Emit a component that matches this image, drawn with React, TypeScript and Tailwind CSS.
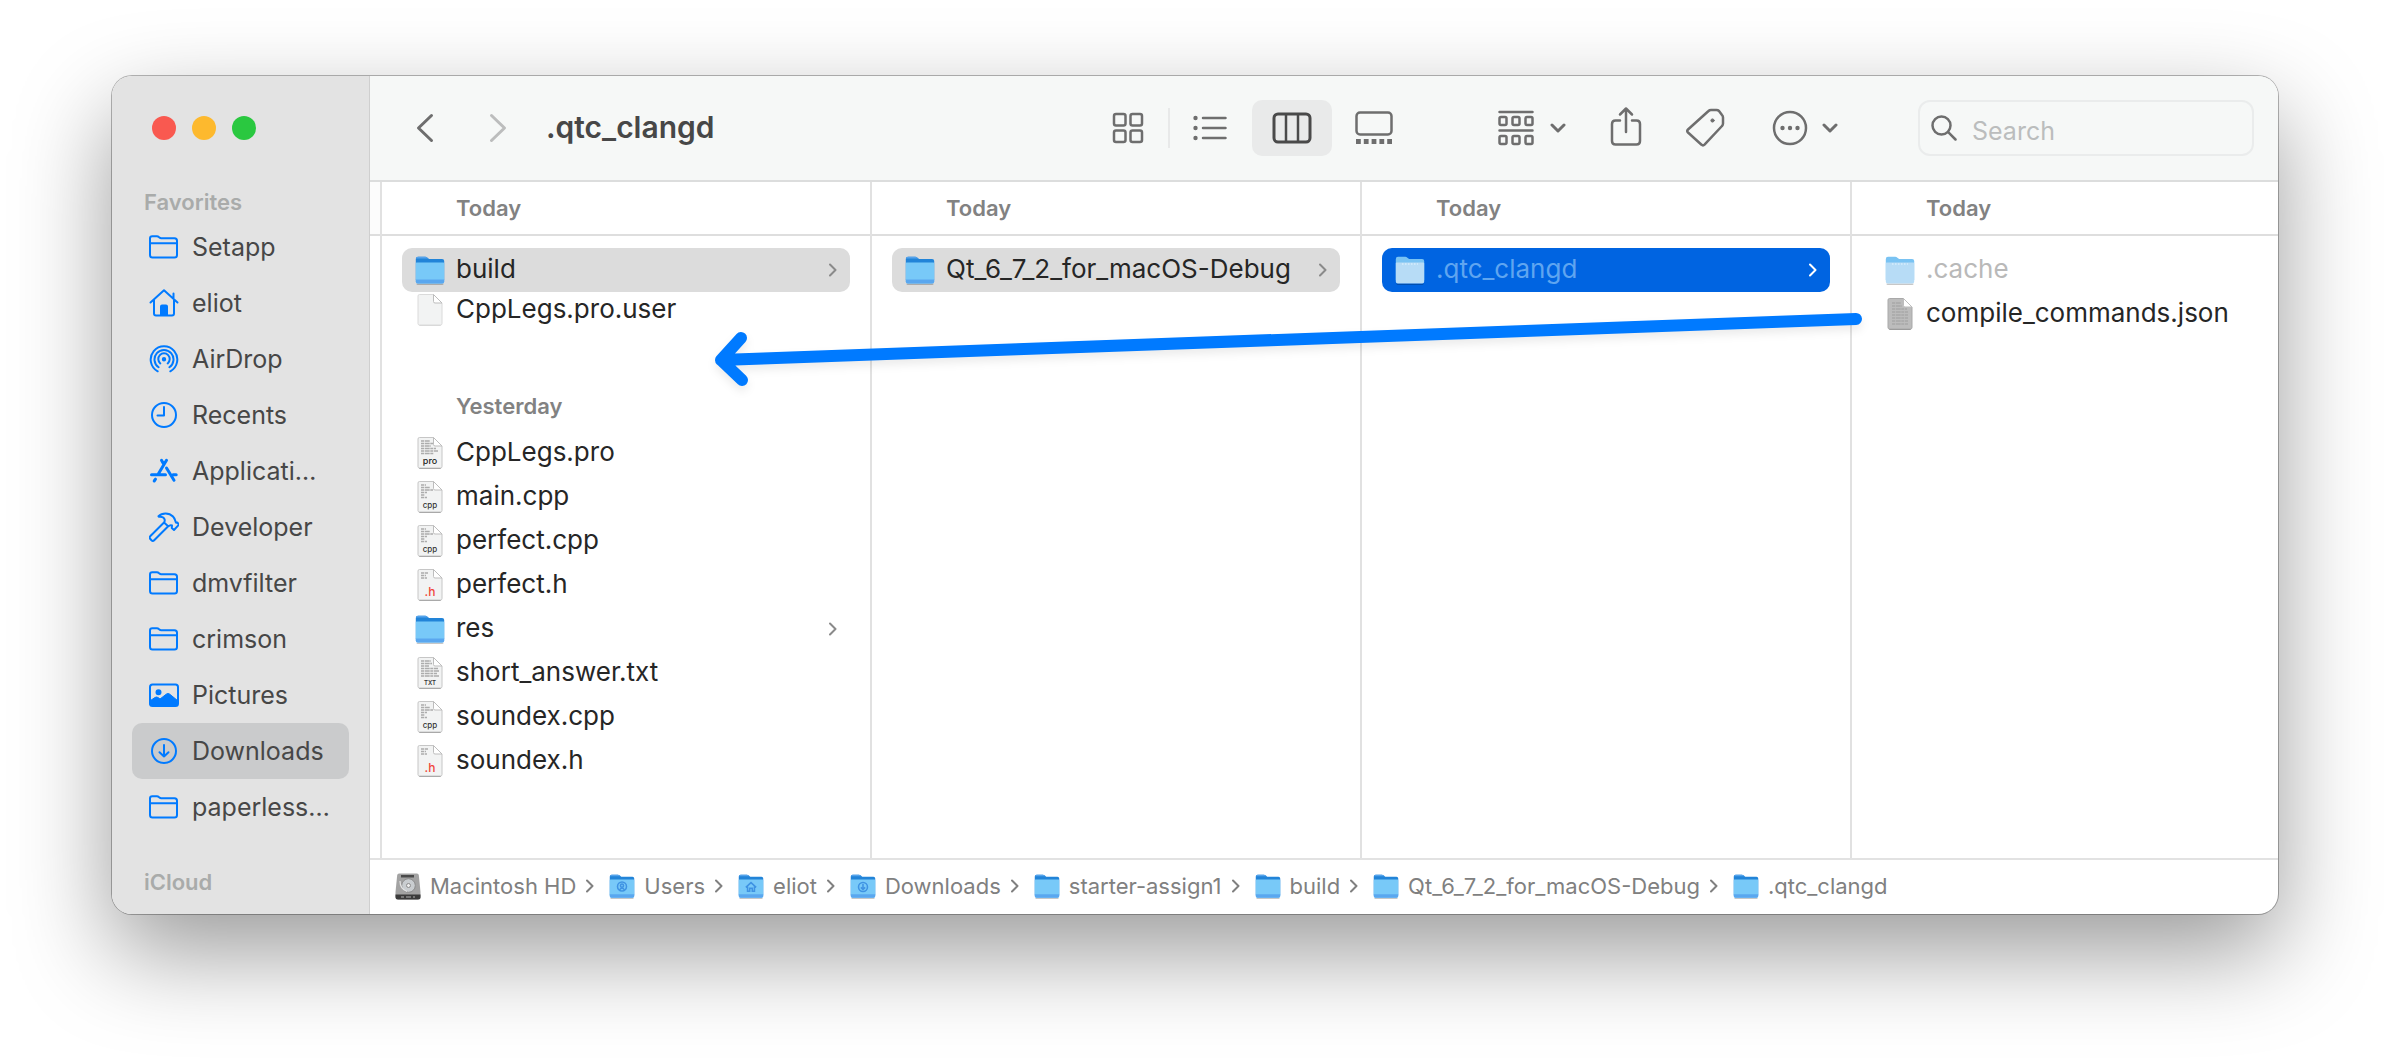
import type { ReactNode } from "react";

type Kind = "folder" | "dim" | "selected" | "blank" | "pro" | "cpp" | "h" | "txt" | "json";

function FolderIcon({ pale = false, glyph, small = false }: { pale?: boolean; glyph?: "users" | "home" | "down"; small?: boolean }) {
  const back = pale ? "#79c3f3" : "#2284d8";
  const front = pale ? "#b7dcf6" : "#78c9f8";
  return (
    <svg viewBox="0 0 30 29" className={small ? "h-[25px] w-[26px] shrink-0" : "h-[29px] w-[30px] shrink-0"} aria-hidden="true">
      <path d="M1.5 27.5h27v.6q0 .9-1 .9h-25q-1 0-1-.9z" fill="#000" opacity=".22" />
      <path d="M.8 3.2Q.8.8 3 .8h7.2q1.3 0 2.2.9l1 .8q.7.6 1.7.6h12q2.1 0 2.1 2V24H.8z" fill={back} />
      {!pale && <path d="M.8 3.2Q.8.8 3 .8h7.2q1.3 0 2.2.9l1 .8H.8z" fill="#55a3ec" />}
      <path d="M.8 7.2q0-.8.8-.8h26.8q.8 0 .8.8V25.6q0 2-2 2H2.8q-2 0-2-2z" fill={front} />
      {!pale && <path d="M.8 23.4h28.4v2.2q0 2-2 2H2.8q-2 0-2-2z" fill="#5aa7ef" />}
      {pale && <path d="M7 8h16" stroke="#e6f5ff" strokeDasharray="1.5 1.5" />}
      {glyph === "users" && (
        <g fill="none" stroke="#3f93e3" strokeWidth="1.8">
          <circle cx="15" cy="14.5" r="5.2" />
          <circle cx="15" cy="13.5" r="1.8" />
          <path d="M12 18.5q3-4 6 0" />
        </g>
      )}
      {glyph === "home" && <path d="M9 15.5l6-5.5 6 5.5M11 14.5V20h2.5v-3.5h3V20H19v-5.500" fill="none" stroke="#3f93e3" strokeWidth="1.8" />}
      {glyph === "down" && (
        <g fill="none" stroke="#3f93e3" strokeWidth="1.8">
          <circle cx="15" cy="15" r="5.2" />
          <path d="M15 11.5v6M12.5 15.5l2.5 2.5 2.5-2.5" />
        </g>
      )}
    </svg>
  );
}

function DocIcon({ kind }: { kind: Kind }) {
  const dark = kind === "json";
  const lines: Record<string, string> = {
    pro: "M4 4h9M4 6.5h12M4 9h10M4 11.5h15M4 14h17M4 16.5h13",
    cpp: "M4 4h5M4 6.5h9M4 9h12M4 11.5h6M4 14h4M4 16.5h6",
    h: "M4 4h7M4 6.5h5M4 9h6",
    txt: "M4 4h10M4 6.5h11M4 9h8M4 11.5h17M4 14h18M4 16.5h16M4 19h18",
    json: "M5 5h9M5 8h10M5 11h15M5 14h16M5 17h16M5 20h16M5 23h16M5 26h16",
  };
  const plain = kind === "blank";
  return (
    <svg viewBox="0 0 26 32" className="mx-[2px] h-8 w-[26px] shrink-0" aria-hidden="true">
      <path d="M2 30.500h22v.5q0 .8-1 .8H3q-1 0-1-.8z" fill="#000" opacity={plain ? ".2" : ".6"} />
      <path
        d="M1 2Q1 .5 2.5.5H16.5L25 9v20.5q0 1.5-1.5 1.5h-21Q1 31 1 29.5z"
        fill={dark ? "#bcbcbc" : "#f2f3f3"}
        stroke={dark ? "#a9a9a9" : plain ? "#dadada" : "#c6c6c6"}
        strokeWidth="1"
      />
      {lines[kind] && <path d={lines[kind]} stroke={dark ? "#a8a8a8" : "#acacac"} strokeWidth="1.3" strokeDasharray="3 .7 5 .6" />}
      <path d="M16.5.5V7.5Q16.5 9 18 9H25z" fill="#fff" stroke="#bdbdbd" strokeWidth="1" />
      {kind === "pro" && <text x="13" y="26.500" textAnchor="middle" fontSize="9" fontWeight="500" fill="#222">pro</text>}
      {kind === "cpp" && <text x="13" y="27" textAnchor="middle" fontSize="8" fontWeight="500" fill="#333">cpp</text>}
      {kind === "txt" && <text x="13" y="28" textAnchor="middle" fontSize="6" fontWeight="600" fill="#333">TXT</text>}
      {kind === "h" && <text x="13" y="26.500" textAnchor="middle" fontSize="12" fontWeight="500" fill="#f0473c">.h</text>}
    </svg>
  );
}

function Arrow({ className }: { className: string }) {
  return (
    <svg viewBox="0 0 8 14" className={className} fill="none" stroke="currentColor" strokeWidth="2" strokeLinecap="round" strokeLinejoin="round" aria-hidden="true">
      <path d="M1 1.5 6.5 7 1 12.5" />
    </svg>
  );
}

function SideIcon({ children }: { children: ReactNode }) {
  return (
    <svg viewBox="0 0 30 30" className="size-[30px] shrink-0 text-[#007aff]" fill="none" stroke="currentColor" strokeWidth="2" strokeLinecap="round" strokeLinejoin="round" aria-hidden="true">
      {children}
    </svg>
  );
}

const outlineFolder = (
  <SideIcon>
    <path d="M1 6.5Q1 4.2 3.3 4.2H8Q9 4.2 9.8 5l.6.5q.8.7 1.8.7H25.5Q28 6.2 28 8.7V23q0 2.5-2.5 2.5h-22Q1 25.5 1 23zM1 11.2h27" />
  </SideIcon>
);

const places: { name: string; icon: ReactNode; active?: boolean }[] = [
  { name: "Setapp", icon: outlineFolder },
  {
    name: "eliot",
    icon: (
      <SideIcon>
        <path d="M1.5 14.5 15 2.3 28.5 14.5M5 12v13.5q0 2 2 2H23q2 0 2-2V12M24.5 10V5.5" />
        <path d="M12 27v-8.5q0-1 1-1h4q1 0 1 1V27z" fill="currentColor" />
      </SideIcon>
    ),
  },
  {
    name: "AirDrop",
    icon: (
      <SideIcon>
        <path d="M8.7 27.3A13.3 13.3 0 1 1 21.3 27.3M9.6 23.2A9.5 9.5 0 1 1 20.4 23.2M11.3 19.4A5.7 5.7 0 1 1 18.7 19.4" />
        <circle cx="15" cy="15.2" r="1.2" fill="currentColor" />
      </SideIcon>
    ),
  },
  {
    name: "Recents",
    icon: (
      <SideIcon>
        <circle cx="15" cy="15" r="12" />
        <path d="M15 7v8.5H8.5" />
      </SideIcon>
    ),
  },
  {
    name: "Applicati…",
    icon: (
      <SideIcon>
        <path d="M2.5 18.7H16.5M24 18.7h3.2M17.5 4.3 9.3 18M12.5 4.3l2 3.5M17.5 12 25 24.3M6.5 23.2l-1.300 1.800" strokeWidth="3" />
      </SideIcon>
    ),
  },
  {
    name: "Developer",
    icon: (
      <SideIcon>
        <path d="M9.5 4.3C13 .5 20 .4 24 4.5 26.5 7 26 9.5 27 10.7L28.3 10.5 30 12.6 25 18 22.8 16 23 13.5C21 12.5 20.5 14 19.2 14.3L15 10.5C16.5 8.5 15.5 5.5 13 5 11.5 4.6 10 5 9.5 4.3ZM15 10.5 1.2 24.3Q0 25.7 1.3 27L2.5 28.3Q3.8 29.6 5.2 28.2L19.2 14.3" />
      </SideIcon>
    ),
  },
  { name: "dmvfilter", icon: outlineFolder },
  { name: "crimson", icon: outlineFolder },
  {
    name: "Pictures",
    icon: (
      <SideIcon>
        <rect x="1" y="4.5" width="28" height="21.5" rx="2.5" />
        <circle cx="9.5" cy="12.3" r="2" fill="currentColor" />
        <path d="M1.5 20.5 6 17.5q1.5-1 3 0L11 19l6.5-5q1.5-1 3 0L28.5 20.5V25H1.5z" fill="currentColor" strokeWidth="1" />
      </SideIcon>
    ),
  },
  {
    name: "Downloads",
    active: true,
    icon: (
      <SideIcon>
        <circle cx="15" cy="15" r="12" />
        <path d="M15 9v11.5M10.5 16.2l4.5 4.3 4.5-4.3" />
      </SideIcon>
    ),
  },
  { name: "paperless…", icon: outlineFolder },
];

function Row({ name, kind, open, short }: { name: string; kind: Kind; open?: boolean; short?: boolean }) {
  const isFolder = kind === "folder" || kind === "dim" || kind === "selected";
  const tone =
    kind === "selected" ? "bg-[#0064e1] text-[#5fa5f0]" : open ? "bg-[#dcdcdc] text-[#262626]" : kind === "dim" ? "text-[#b9b9b9]" : "text-[#262626]";
  return (
    <li>
      <button type="button" className={`flex w-full items-center rounded-[10px] px-[13px] text-left text-[26px] ${short ? "h-9" : "h-11"} ${tone}`}>
        {isFolder ? <FolderIcon pale={kind !== "folder"} /> : <DocIcon kind={kind} />}
        <span className="ml-[11px] min-w-0 flex-1 pb-[3px] whitespace-nowrap">{name}</span>
        {isFolder && kind !== "dim" && <Arrow className={`h-3.5 w-2 shrink-0 ${kind === "selected" ? "text-white" : "text-[#8a8a8a]"}`} />}
      </button>
    </li>
  );
}

function Column({ children }: { children: ReactNode }) {
  return (
    <section className="flex min-w-0 flex-col border-l-2 border-[#e1e1e1]">
      <h2 className="flex h-[54px] shrink-0 items-center border-b-2 border-[#dedede] pl-[74px] text-[22px] font-semibold text-[#828282]">Today</h2>
      <div className="flex-1 px-5 pt-3">{children}</div>
    </section>
  );
}

const yesterday: { name: string; kind: Kind }[] = [
  { name: "CppLegs.pro", kind: "pro" },
  { name: "main.cpp", kind: "cpp" },
  { name: "perfect.cpp", kind: "cpp" },
  { name: "perfect.h", kind: "h" },
  { name: "res", kind: "folder" },
  { name: "short_answer.txt", kind: "txt" },
  { name: "soundex.cpp", kind: "cpp" },
  { name: "soundex.h", kind: "h" },
];

function DiskIcon() {
  return (
    <svg viewBox="0 0 26 27" className="h-[27px] w-[26px] shrink-0" aria-hidden="true">
      <path d="M4 .5h18q1.5 0 1.8 1.5L25.5 19v5q0 2.5-2.5 2.500H3Q.5 26.5.5 24v-5L2.2 2Q2.5.5 4 .5z" fill="#a3a3a3" />
      <path d="M.5 21.500h25V24q0 2.500-2.500 2.500H3Q.5 26.500.5 24z" fill="#3b3b3b" />
      <path d="M6 2h13v2.500H6z" fill="#4a4a4a" />
      <circle cx="13.5" cy="12.500" r="6.800" fill="#c9cdd0" stroke="#8d8d8d" />
      <circle cx="13.5" cy="12.500" r="2" fill="#eee" stroke="#8d8d8d" />
      <path d="M5 8q0 8 7 10.500" fill="none" stroke="#e4e4e4" strokeWidth="1.2" />
      <path d="M6 24h3M11 24h5M18 24h2" stroke="#8b8b8b" strokeWidth="1.5" />
    </svg>
  );
}

const crumbs: { name: string; icon: ReactNode }[] = [
  { name: "Macintosh HD", icon: <DiskIcon /> },
  { name: "Users", icon: <FolderIcon small glyph="users" /> },
  { name: "eliot", icon: <FolderIcon small glyph="home" /> },
  { name: "Downloads", icon: <FolderIcon small glyph="down" /> },
  { name: "starter-assign1", icon: <FolderIcon small /> },
  { name: "build", icon: <FolderIcon small /> },
  { name: "Qt_6_7_2_for_macOS-Debug", icon: <FolderIcon small /> },
  { name: ".qtc_clangd", icon: <FolderIcon small /> },
];

function Caret() {
  return (
    <svg viewBox="0 0 16 10" className="h-2.5 w-4" fill="none" stroke="currentColor" strokeWidth="3" strokeLinecap="round" strokeLinejoin="round" aria-hidden="true">
      <path d="M2 2l6 6 6-6" />
    </svg>
  );
}

function ViewButton({ label, active, children }: { label: string; active?: boolean; children: ReactNode }) {
  return (
    <button
      type="button"
      aria-label={label}
      aria-pressed={!!active}
      className={`flex h-14 w-20 items-center justify-center rounded-[10px] ${active ? "bg-[#e9eaea] text-[#4a4a4a]" : "text-[#6e6e6e]"}`}
    >
      {children}
    </button>
  );
}

function Toolbar() {
  return (
    <header className="flex h-[106px] shrink-0 items-center border-b-2 border-[#dcdddd] bg-[#f6f8f7] pr-6 pl-[39px] text-[#6e6e6e]">
      <button type="button" aria-label="Back" className="flex w-8 justify-center">
        <svg viewBox="0 0 18 30" className="h-[30px] w-[18px]" fill="none" stroke="currentColor" strokeWidth="3" strokeLinecap="round" strokeLinejoin="round">
          <path d="M15.5 2.5 2.5 15l13 12.5" />
        </svg>
      </button>
      <button type="button" aria-label="Forward" className="ml-[41px] flex w-8 justify-center text-[#bcbdbd]">
        <svg viewBox="0 0 18 30" className="h-[30px] w-[18px]" fill="none" stroke="currentColor" strokeWidth="3" strokeLinecap="round" strokeLinejoin="round">
          <path d="M2.5 2.5 15.5 15l-13 12.5" />
        </svg>
      </button>
      <h1 className="ml-8 pb-0.5 text-[30px] font-semibold text-[#474747]">.qtc_clangd</h1>

      <div className="ml-auto flex items-center" role="group" aria-label="View">
        <ViewButton label="Icons">
          <svg viewBox="0 0 32 32" className="size-8" fill="none" stroke="currentColor" strokeWidth="2.5">
            <rect x="2" y="2" width="11.5" height="11.5" rx="2" />
            <rect x="18.5" y="2" width="11.5" height="11.5" rx="2" />
            <rect x="2" y="18.5" width="11.5" height="11.5" rx="2" />
            <rect x="18.5" y="18.5" width="11.5" height="11.5" rx="2" />
          </svg>
        </ViewButton>
        <span className="h-10 w-[2px] bg-[#e8e9e9]" />
        <ViewButton label="List">
          <svg viewBox="0 0 34 26" className="h-[26px] w-[34px]" fill="none" stroke="currentColor" strokeWidth="2.5" strokeLinecap="round">
            <path d="M10 3h22.5M10 13h22.5M10 23h22.5" />
            <g fill="currentColor" stroke="none">
              <circle cx="2.5" cy="3" r="2.2" />
              <circle cx="2.5" cy="13" r="2.2" />
              <circle cx="2.5" cy="23" r="2.2" />
            </g>
          </svg>
        </ViewButton>
        <span className="w-[2px]" />
        <ViewButton label="Columns" active>
          <svg viewBox="0 0 40 32" className="h-8 w-10" fill="none" stroke="currentColor" strokeWidth="3">
            <rect x="2" y="2" width="36" height="28" rx="4" />
            <path d="M14 2v28M26 2v28" strokeWidth="2.5" />
          </svg>
        </ViewButton>
        <span className="w-[2px]" />
        <ViewButton label="Gallery">
          <svg viewBox="0 0 38 34" className="h-[34px] w-[38px]" fill="none" stroke="currentColor" strokeWidth="2.5">
            <rect x="1.5" y="1.5" width="35" height="22" rx="3.5" />
            <path d="M1 30.5h4.800M8.800 30.5h4.800M16.600 30.5h4.800M24.400 30.5h4.800M32.200 30.5H37" strokeWidth="5" />
          </svg>
        </ViewButton>
      </div>

      <button type="button" aria-label="Group by" className="ml-[84px] flex items-center gap-4">
        <svg viewBox="0 0 36 36" className="size-9" fill="none" stroke="currentColor" strokeWidth="2.5" strokeLinecap="round">
          <path d="M1.5 2h33M1.5 20.500h33" />
          <rect x="1.5" y="7" width="7" height="8" rx="1.5" />
          <rect x="14.5" y="7" width="7" height="8" rx="1.5" />
          <rect x="27.5" y="7" width="7" height="8" rx="1.5" />
          <rect x="1.5" y="26" width="7" height="8" rx="1.5" />
          <rect x="14.5" y="26" width="7" height="8" rx="1.5" />
          <rect x="27.5" y="26" width="7" height="8" rx="1.5" />
        </svg>
        <Caret />
      </button>
      <button type="button" aria-label="Share" className="ml-11">
        <svg viewBox="0 0 32 40" className="mb-1 h-10 w-8" fill="none" stroke="currentColor" strokeWidth="2.5" strokeLinecap="round" strokeLinejoin="round">
          <path d="M10 14.5H5.5Q2 14.5 2 18v17q0 3.5 3.5 3.5h21Q30 38.5 30 35V18q0-3.500-3.500-3.500H22M16 26V3M10 8.500 16 2.500l6 6" />
        </svg>
      </button>
      <button type="button" aria-label="Tags" className="ml-[43px]">
        <svg viewBox="0 0 40 40" className="size-10" fill="none" stroke="currentColor" strokeWidth="2.5" strokeLinecap="round" strokeLinejoin="round">
          <path d="M23.500 3Q24.500 2 26 2H31.500Q33 2 34 3L37 7Q38 8.200 38 9.500V15.500Q38 17 37 18L19.500 36.700Q18 38.200 16.500 36.700L3 24.500Q1.500 23 3 21.500z" />
          <circle cx="27.500" cy="12.500" r="1.600" fill="currentColor" strokeWidth="1" />
        </svg>
      </button>
      <button type="button" aria-label="More actions" className="ml-[47px] flex items-center gap-[14px]">
        <svg viewBox="0 0 36 36" className="size-9" fill="none" stroke="currentColor" strokeWidth="2.5">
          <circle cx="18" cy="18" r="16" />
          <g fill="currentColor" stroke="none">
            <circle cx="10.5" cy="18" r="2.2" />
            <circle cx="18" cy="18" r="2.2" />
            <circle cx="25.5" cy="18" r="2.2" />
          </g>
        </svg>
        <Caret />
      </button>
      <div className="ml-20 flex h-14 w-[336px] items-center rounded-[12px] border-2 border-[#eaecec] pl-[11px]">
        <svg viewBox="0 0 26 26" className="size-[26px] shrink-0" fill="none" stroke="currentColor" strokeWidth="2.5" strokeLinecap="round" aria-hidden="true">
          <circle cx="10.5" cy="10.5" r="9" />
          <path d="M17.2 17.2 24.5 24.5" />
        </svg>
        <input type="search" aria-label="Search" placeholder="Search" className="ml-[15px] h-full min-w-0 flex-1 bg-transparent pt-1.5 text-[25px] text-[#474747] outline-none placeholder:text-[#bbbdbd]" />
      </div>
    </header>
  );
}

export default function App() {
  return (
    <div className="flex min-h-screen bg-white px-28 pt-[76px] pb-[148px] font-['Inter',sans-serif]">
      <div className="flex min-w-0 flex-1 overflow-hidden rounded-[20px] bg-white shadow-[0_0_0_1px_rgba(0,0,0,0.28),0_38px_96px_rgba(0,0,0,0.4)]">
        <aside className="w-[258px] shrink-0 border-r border-[#cfcfcf] bg-[#e3e3e3]">
          <div className="flex h-[104px] items-center gap-4 pl-10">
            <button type="button" aria-label="Close" className="size-6 rounded-full bg-[#f95950]" />
            <button type="button" aria-label="Minimize" className="size-6 rounded-full bg-[#fdb92e]" />
            <button type="button" aria-label="Zoom" className="size-6 rounded-full bg-[#2ac840]" />
          </div>
          <h2 className="flex h-[39px] items-center pt-1.5 pl-8 text-[22px] font-semibold text-[#a9abaa]">Favorites</h2>
          <nav aria-label="Favorites" className="px-5">
            {places.map((p) => (
              <a key={p.name} href="#" className={`flex h-14 items-center gap-[13px] rounded-[10px] pl-[17px] text-[25px] text-[#474747] ${p.active ? "bg-[#cacbcc]" : ""}`}>
                {p.icon}
                <span className="pt-0.5 whitespace-nowrap">{p.name}</span>
              </a>
            ))}
          </nav>
          <h2 className="mt-[27px] flex h-10 items-center pl-8 text-[22px] font-semibold text-[#a9abaa]">iCloud</h2>
        </aside>

        <main className="flex min-w-0 flex-1 flex-col">
          <Toolbar />
          <div className="relative grid flex-1 grid-cols-[10px_minmax(0,490fr)_minmax(0,490fr)_minmax(0,490fr)_minmax(0,428fr)]">
            <div className="h-[54px] border-b-2 border-[#dedede] bg-[#fcfcfc]" />
            <Column>
              <ul>
                <Row name="build" kind="folder" open />
                <Row name="CppLegs.pro.user" kind="blank" short />
              </ul>
              <h3 className="mt-[53px] flex h-[50px] items-center pl-[54px] text-[22px] font-semibold text-[#828282]">Yesterday</h3>
              <ul>
                {yesterday.map((f) => (
                  <Row key={f.name} {...f} />
                ))}
              </ul>
            </Column>
            <Column>
              <ul>
                <Row name="Qt_6_7_2_for_macOS-Debug" kind="folder" open />
              </ul>
            </Column>
            <Column>
              <ul>
                <Row name=".qtc_clangd" kind="selected" />
              </ul>
            </Column>
            <Column>
              <ul>
                <Row name=".cache" kind="dim" />
                <Row name="compile_commands.json" kind="json" />
              </ul>
            </Column>
            <svg
              viewBox="0 0 1908 676"
              preserveAspectRatio="xMinYMin meet"
              className="pointer-events-none absolute inset-0 size-full drop-shadow-[0_5px_4px_rgba(0,0,0,0.08)]"
              fill="none"
              stroke="#007aff"
              strokeWidth="12"
              strokeLinecap="round"
              strokeLinejoin="round"
              aria-hidden="true"
            >
              <path d="M1486 137 351 178M371 156 351 178 372 198" />
            </svg>
          </div>
          <footer className="h-14 shrink-0 border-t-2 border-[#e2e2e2] pl-[25px]">
            <nav aria-label="Path" className="flex h-full items-center pb-0.5 text-[22px] text-[#808080]">
              {crumbs.map((c, i) => (
                <a key={c.name} href="#" className="flex items-center whitespace-nowrap">
                  {c.icon}
                  <span className="ml-[9px]">{c.name}</span>
                  {i < crumbs.length - 1 && <Arrow className="mr-[15px] ml-2.5 h-3.5 w-2" />}
                </a>
              ))}
            </nav>
          </footer>
        </main>
      </div>
    </div>
  );
}
